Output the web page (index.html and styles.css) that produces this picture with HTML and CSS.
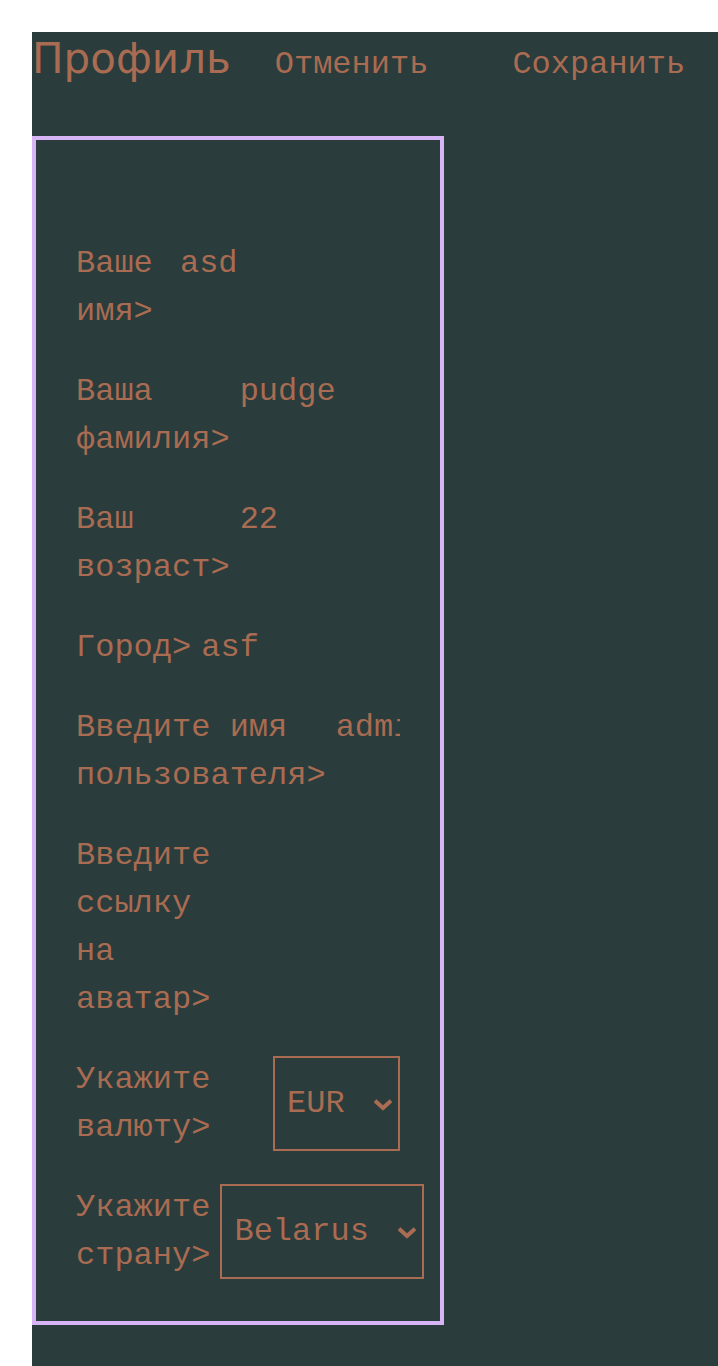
FILE: index.html
```html
<!DOCTYPE html>
<html lang="ru">
<head>
<meta charset="utf-8">
<title>Профиль</title>
<link rel="stylesheet" href="styles.css">
</head>
<body>
<div class="page">
  <div class="panel">
    <header class="topbar">
      <h1 class="title">Профиль</h1>
      <button class="action action-cancel" type="button">Отменить</button>
      <button class="action action-save" type="button">Сохранить</button>
    </header>
    <form class="profile-form">
      <div class="row">
        <label class="label" for="f1">Ваше имя&gt;</label>
        <input class="field" id="f1" type="text" value="asd">
      </div>
      <div class="row">
        <label class="label" for="f2">Ваша фамилия&gt;</label>
        <input class="field" id="f2" type="text" value="pudge">
      </div>
      <div class="row">
        <label class="label" for="f3">Ваш возраст&gt;</label>
        <input class="field" id="f3" type="text" value="22">
      </div>
      <div class="row">
        <label class="label" for="f4">Город&gt;</label>
        <input class="field" id="f4" type="text" value="asf">
      </div>
      <div class="row">
        <label class="label" for="f5">Введите имя пользователя&gt;</label>
        <input class="field" id="f5" type="text" value="admin">
      </div>
      <div class="row">
        <label class="label" for="f6">Введите ссылку на аватар&gt;</label>
        <input class="field" id="f6" type="text" value="">
      </div>
      <div class="row">
        <label class="label" for="f7">Укажите валюту&gt;</label>
        <div class="select-wrap">
          <select class="choice" id="f7">
            <option>EUR</option>
            <option>USD</option>
          </select>
          <svg class="chevron" width="18" height="12" viewBox="0 0 18 12" aria-hidden="true">
            <polyline points="2.5,3 9,9 15.5,3" fill="none" stroke="#a96b51" stroke-width="4" stroke-linecap="square" stroke-linejoin="miter"/>
          </svg>
        </div>
      </div>
      <div class="row">
        <label class="label" for="f8">Укажите страну&gt;</label>
        <div class="select-wrap">
          <select class="choice" id="f8">
            <option>Belarus</option>
            <option>Russia</option>
          </select>
          <svg class="chevron" width="18" height="12" viewBox="0 0 18 12" aria-hidden="true">
            <polyline points="2.5,3 9,9 15.5,3" fill="none" stroke="#a96b51" stroke-width="4" stroke-linecap="square" stroke-linejoin="miter"/>
          </svg>
        </div>
      </div>
    </form>
  </div>
</div>
</body>
</html>
```

FILE: styles.css
```css
html, body {
  margin: 0;
  padding: 0;
  background: #ffffff;
}

.page {
  padding: 32px 0 0 32px;
}

.panel {
  background: #2a3c3c;
  min-height: calc(100vh - 32px);
  color: #a96b51;
  font-family: "Liberation Mono", monospace;
  font-size: 32px;
}

.topbar {
  display: flex;
  align-items: baseline;
  padding-top: 2px;
}

.title {
  margin: 0 44px 0 0;
  font-family: "DejaVu Sans", sans-serif;
  font-weight: normal;
  font-size: 42px;
  line-height: 49px;
  color: #a96b51;
}

.action {
  background: transparent;
  border: none;
  padding: 0;
  margin: 0;
  color: #a96b51;
  font-family: "Liberation Mono", monospace;
  font-size: 32px;
  line-height: 37px;
  cursor: pointer;
}

.action-save {
  margin-left: 84px;
}

.profile-form {
  box-sizing: border-box;
  width: 412px;
  margin-top: 53px;
  border: 4px solid #d7b4f5;
  padding: 100px 40px 41px 40px;
  display: flex;
  flex-direction: column;
  gap: 32px;
}

.row {
  display: flex;
  align-items: flex-start;
  gap: 10px;
}

.label {
  flex: 0 1 auto;
  line-height: 48px;
}

.field {
  flex: 0 1 405px;
  min-width: 0;
  height: 48px;
  padding: 0;
  border: none;
  outline: none;
  background: transparent;
  color: #a96b51;
  font-family: "Liberation Mono", monospace;
  font-size: 32px;
  line-height: 48px;
}

.select-wrap {
  position: relative;
  flex: none;
  align-self: flex-start;
  display: flex;
}

.choice {
  -webkit-appearance: none;
  appearance: none;
  box-sizing: border-box;
  height: 95px;
  margin: 0;
  padding: 0 53px 0 12px;
  border: 2px solid #a96b51;
  border-radius: 0;
  background: transparent;
  color: #a96b51;
  font-family: "Liberation Mono", monospace;
  font-size: 32px;
  outline: none;
}

.chevron {
  position: absolute;
  right: 8px;
  top: 43px;
  pointer-events: none;
}
```
